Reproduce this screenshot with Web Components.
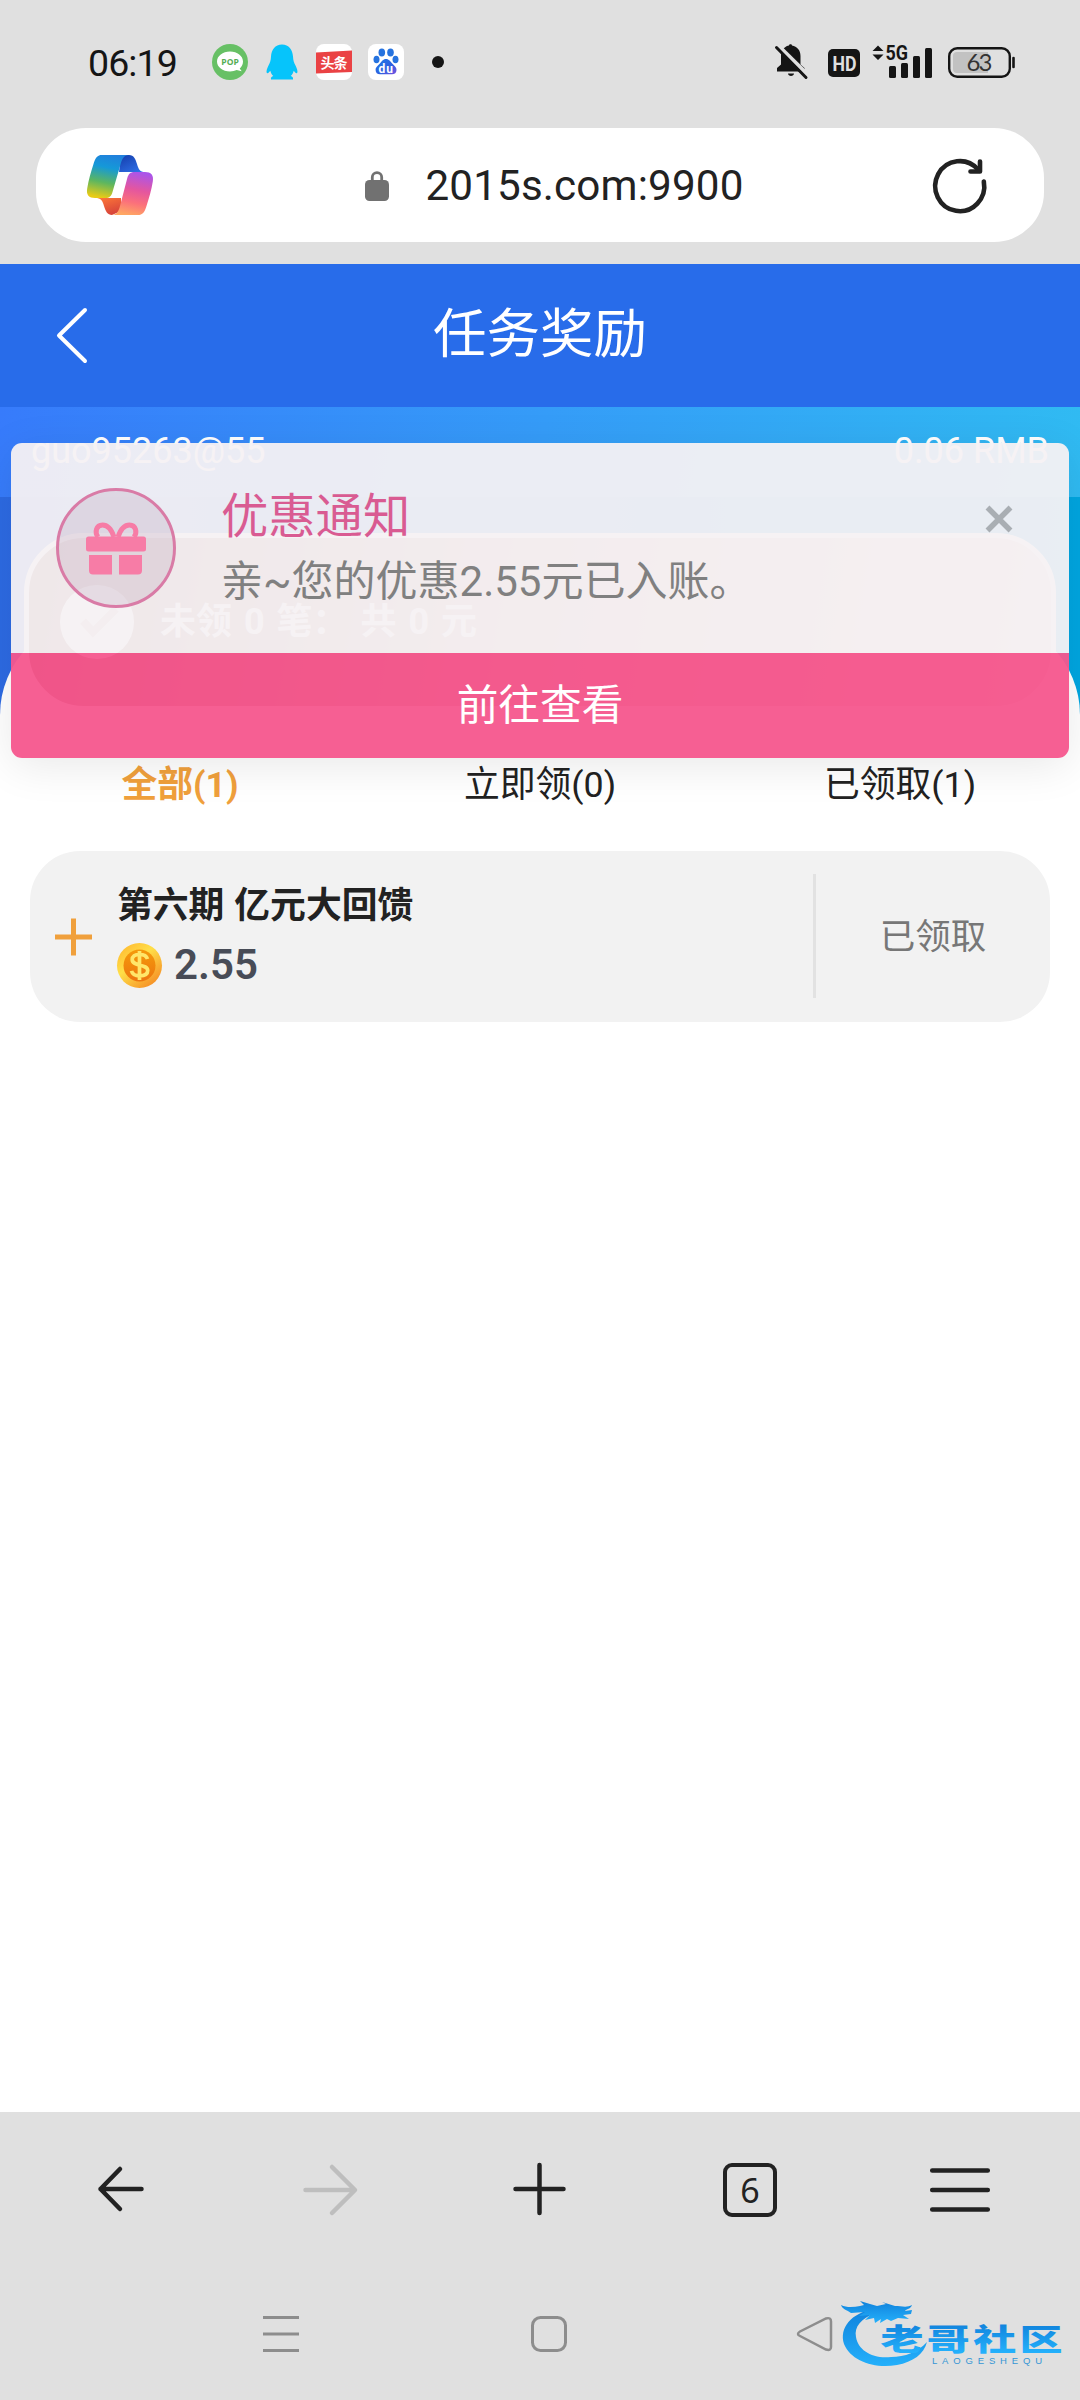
<!DOCTYPE html>
<html lang="zh-CN">
<head>
<meta charset="utf-8">
<meta name="viewport" content="width=device-width">
<title>任务奖励</title>
<style>
html,body{margin:0;padding:0}
body{width:1080px;height:2400px;overflow:hidden;background:#e0e0e0;font-family:Roboto,"Noto Sans CJK SC",sans-serif;color:#222}
</style>
</head>
<body>
<phone-screen></phone-screen>
<script>
const define=(name,css,html)=>{
  const t=document.createElement('template');
  t.innerHTML=`<style>*{box-sizing:border-box}svg{display:block;flex:none;overflow:visible}${css}</style>${html}`;
  customElements.define(name,class extends HTMLElement{
    constructor(){super();this.attachShadow({mode:'open'}).append(t.content.cloneNode(true));}
  });
};

define('status-bar',`
:host{display:flex;height:128px;padding:0 65px 4px 88px;align-items:center;justify-content:space-between;color:#151515}
.l,.r{display:flex;align-items:center;height:40px}
time{font-size:37.5px;line-height:40px;letter-spacing:-.9px;width:124px;padding-top:2px}
.l svg+svg{margin-left:16px}
`,`
<div class="l"><time>06:19</time>
<svg width="36" height="36" viewBox="0 0 36 36"><circle cx="18" cy="18" r="18" fill="#67c065"/><path d="M18 7.500c7.300 0 13 4.500 13 10 0 3-1.500 5.500-3.300 7l2 2.800-5-1.200c-2 .9-4 1.400-6.700 1.400-7.300 0-13-4.500-13-10s5.700-10 13-10z" fill="#fff"/><text x="9.300" y="20.800" font-family="Open Sans,sans-serif" font-size="8.500" font-weight="700" fill="#55ad54" textLength="17.500">POP</text></svg>
<svg width="36" height="36" viewBox="0 0 36 36"><path d="M18 .5c7 0 10.500 5 11 12 .2 4 1 6 2.500 9 1.500 3 2.500 6 1.700 7.500-.9.800-2.500-1-3.500-2.300-.5 2.300-1.500 4-3 5.300 1.800.7 2.700 1.600 2.300 3.500H7c-.4-1.900.5-2.800 2.300-3.500-1.500-1.300-2.500-3-3-5.300-1 1.300-2.600 3.100-3.500 2.300C2 27.500 3 24.500 4.500 21.500c1.500-3 2.300-5 2.500-9C7.500 5.500 11 .5 18 .5z" fill="#06c4fb"/></svg>
<svg width="36" height="36" viewBox="0 0 36 36"><rect width="36" height="36" rx="8" fill="#fff"/><path d="M0 8.500L36 6.500V28L0 29.500z" fill="#ea4244"/><text x="4.500" y="23.500" font-family="Noto Sans CJK SC,sans-serif" font-size="14" font-weight="700" fill="#fff" textLength="27">头条</text></svg>
<svg width="36" height="36" viewBox="0 0 36 36"><rect width="36" height="36" rx="8" fill="#fff"/><linearGradient id="p" x2="1" y2="1"><stop stop-color="#1f7be6"/><stop offset=".6" stop-color="#2f5fe0"/><stop offset="1" stop-color="#7b52e0"/></linearGradient><g fill="#2673df"><ellipse cx="13.800" cy="8.500" rx="3.300" ry="4"/><ellipse cx="22.500" cy="8.500" rx="3.300" ry="4"/><ellipse cx="8.500" cy="15.500" rx="3" ry="3.800"/><ellipse cx="27.500" cy="15.500" rx="3" ry="3.800"/></g><path d="M18 15c3 0 4.500 2.500 6.200 4.600 2 2.400 4.300 3.400 4.300 6.400 0 3-2 4.500-5 4.300H12.500C9.500 30.500 7.600 29 7.600 26c0-3 2.400-4 4.300-6.400C13.600 17.500 15 15 18 15z" fill="url(#p)"/><text x="10.500" y="28.500" font-family="Roboto,sans-serif" font-weight="700" font-size="12" fill="#fff" textLength="14.500">du</text></svg>
<svg width="12" height="12" style="margin-left:28px"><circle cx="6" cy="6" r="6" fill="#151515"/></svg>
</div>
<div class="r">
<svg width="34" height="36" viewBox="0 0 34 36"><path d="M2 27.500v-3.500l4-3.500v-9C6 5 11 2 14 1.500c0-1.800 3-1.800 3 0C22 2.500 25.500 6 25.500 12v8.500l4 3.500v3.500z" fill="#151515"/><path d="M13 29.500h6c0 3.300-6 3.300-6 0z" fill="#151515"/><path d="M2.500 1L33 31" stroke="#e0e0e0" stroke-width="4"/><path d="M1.500 3.500L31 33.500" stroke="#151515" stroke-width="3" stroke-linecap="round"/></svg>
<svg width="32" height="28" viewBox="0 0 32 28" style="margin:2px 12px 0 19px"><rect width="32" height="28" rx="5" fill="#151515"/><text x="4.500" y="21.500" font-family="Roboto,sans-serif" font-size="21" font-weight="700" fill="#e0e0e0" textLength="24" lengthAdjust="spacingAndGlyphs">HD</text></svg>
<svg width="60" height="34" viewBox="0 0 60 34" fill="#151515"><path d="M6 .5l5.500 5.500H.5zM.5 9.500h11L6 15z"/><text x="13.500" y="15" font-family="Roboto,sans-serif" font-size="21" font-weight="700" textLength="22.500" lengthAdjust="spacingAndGlyphs">5G</text><rect x="17" y="21" width="7" height="12" rx="1.500"/><rect x="29" y="18" width="7" height="15" rx="1.500"/><rect x="41" y="11" width="7" height="22" rx="1.500"/><rect x="53" y="3" width="7" height="30" rx="1.500"/></svg>
<svg width="67" height="31" viewBox="0 0 67 31" style="margin-left:16px"><rect x="1.200" y="1.200" width="60.600" height="28.600" rx="8" fill="none" stroke="#151515" stroke-width="2.400"/><path d="M9 5h31v21H9q-4 0-4-4V9q0-4 4-4z" fill="#c2c2c2"/><path d="M65.500 11v9" stroke="#151515" stroke-width="2.600" stroke-linecap="round"/><text x="18.500" y="24" font-family="Lato,sans-serif" font-size="24" fill="#333" textLength="26">63</text></svg>
</div>`);

define('address-bar',`
:host{display:flex;height:114px;margin:0 36px 22px;border-radius:50px;background:#fff;align-items:center;padding:0 56px 0 51px;justify-content:space-between}
.u{display:flex;align-items:center;gap:36px;font-size:42.200px;line-height:50px;padding:1px 0 0 24px;letter-spacing:.15px}
`,`
<svg width="66" height="60" viewBox="0 0 66 60"><defs>
<linearGradient id="a" x1=".6" y1="0" x2=".4" y2="1"><stop stop-color="#2080dc"/><stop offset=".3" stop-color="#1599d8"/><stop offset=".65" stop-color="#5cb660"/><stop offset="1" stop-color="#e8cb16"/></linearGradient>
<linearGradient id="b" x1="1" y1="1" x2=".2" y2="0"><stop stop-color="#3276ee"/><stop offset="1" stop-color="#1641b0"/></linearGradient>
<linearGradient id="c" x1=".6" y1="0" x2=".4" y2="1"><stop stop-color="#aa55ea"/><stop offset=".4" stop-color="#e4569f"/><stop offset=".7" stop-color="#fb707b"/><stop offset="1" stop-color="#ffa763"/></linearGradient>
<linearGradient id="d" x2=".5" y2="1"><stop stop-color="#ff7b38"/><stop offset="1" stop-color="#d8453a"/></linearGradient></defs>
<path d="M34 0h8c5 0 6.500 4 8 9 1.600 5.500 3 8 8 8H32z" fill="url(#b)"/>
<path d="M8 43h26v13l-9 4c-4.500 0-6.500-4-8-9-1.500-5.500-3-8-9-8z" fill="url(#d)"/>
<path d="M15 0h27c-5 0-7 4-8.500 9.500L25.500 37c-1.200 4-3 6-7 6H8c-6 0-9-3-7.800-9.500C1.500 25 4 17 6.500 9 8.500 2.500 10.500 0 15 0z" fill="url(#a)"/>
<path d="M51 60H25c4.500 0 6.500-3.500 8-9l7.300-28c1.200-4 3-6 7-6H58c6 0 9 3 7.800 9.500C64.500 35 62 43 59.500 51c-2 6.500-4 9-8.500 9z" fill="url(#c)"/></svg>
<div class="u"><svg width="24" height="30" viewBox="0 0 24 30"><rect y="9" width="24" height="21" rx="4.500" fill="#717171"/><path d="M7.300 11V6.300a4.700 4.700 0 0 1 9.400 0V11" fill="none" stroke="#717171" stroke-width="2.800"/></svg><span>2015s.com:9900</span></div>
<svg width="56" height="56" viewBox="0 0 56 56" fill="none" stroke="#222" stroke-width="4.600" stroke-linecap="round" stroke-linejoin="round"><path d="M51.800 24.500A24.500 25 0 1 1 46 12.500"/><path d="M48 4.500V14.500H38.500"/></svg>`);

define('page-header',`
:host{display:flex;height:143px;background:#286cea;align-items:center;padding:0 55px;color:#fff}
h1{flex:1;margin:0 31px 0 0;text-align:center;font-weight:400;font-size:53.500px;line-height:70px;padding-bottom:1px}
`,`<svg width="31" height="54" viewBox="0 0 31 54" fill="none" stroke="#fff" stroke-width="4" stroke-linecap="round" stroke-linejoin="round"><path d="M30 1L4 26.500 30 52"/></svg><h1><slot></slot></h1>`);

define('balance-strip',`
:host{display:flex;height:90px;background:linear-gradient(100deg,#377bfb,#359cf8 50%,#30bbf2);justify-content:space-between;padding:23px 31px 0 31px;color:#fff;font-size:36px;line-height:42px}
`,`<slot name="user"></slot><slot name="amount"></slot>`);

define('pending-summary',`
:host{display:flex;position:relative;z-index:1;margin:0 24px;height:178px;border:5px solid #fff;border-radius:60px;background:linear-gradient(100deg,#7a3c30,#c69a90 50%,#edd0d0);align-items:center;padding:0 31px 0;gap:26px;color:#fff;font-size:36px;font-weight:700}
span{white-space:pre;line-height:44px;word-spacing:3px}
`,`<svg width="74" height="74" viewBox="0 0 74 74"><circle cx="37" cy="37" r="37" fill="#fff"/><path d="M23 36l10 11 23-23" fill="none" stroke="#d4b5af" stroke-width="8"/></svg><span><slot></slot></span>`);

define('reward-tabs',`
:host{display:flex;height:66px;font-size:35.800px;line-height:68px;text-align:center}
::slotted(*){flex:1}
::slotted([active]){color:#f0a03c;font-weight:700}
`,`<slot></slot>`);

define('reward-card',`
:host{display:flex;height:171px;margin:34px 30px 0;border-radius:50px;background:#f2f2f2;align-items:center;padding-left:24px}
.m{flex:1;padding:3px 0 0 24px}
h2{margin:0;font-size:35.800px;line-height:50px;font-weight:700;word-spacing:1px}
.v{display:flex;align-items:center;gap:12px;font-size:42px;line-height:64px;font-weight:600;color:#484c57;padding-top:2px;margin-bottom:-2px}
.s{width:237px;height:124px;border-left:3px solid #e2e2e2;display:flex;align-items:center;justify-content:center;color:#777;font-size:35.500px;padding-bottom:5px;margin-top:-2px}
`,`<svg width="39" height="38"><path d="M1 19h37M19.500 0.500v37" stroke="#f0a03c" stroke-width="5"/></svg>
<div class="m"><h2><slot name="title"></slot></h2><div class="v"><svg width="45" height="45" viewBox="0 0 45 45"><defs><linearGradient id="o" x2=".8" y2="1"><stop stop-color="#ffb22c"/><stop offset=".45" stop-color="#ffdf48"/><stop offset="1" stop-color="#f58b24"/></linearGradient><linearGradient id="i" x2="0" y2="1"><stop stop-color="#f49b0b"/><stop offset="1" stop-color="#ed750f"/></linearGradient></defs><circle cx="22.500" cy="22.500" r="22.500" fill="url(#o)"/><circle cx="22.500" cy="22.500" r="16" fill="url(#i)"/><path d="M30.500 16c-1-3.500-4-4.700-8-4.700-4.500 0-7.300 2-7.300 5.300 0 7.500 15.500 3.700 15.500 11 0 3.500-3.300 5.300-8 5.300-4.400 0-7.400-1.700-8.200-5M22.500 8v29" fill="none" stroke="#ffe66a" stroke-width="3.700"/></svg><slot name="value"></slot></div></div>
<div class="s"><slot name="state"></slot></div>`);

define('promo-notice',`
:host{display:flex;flex-direction:column;position:absolute;z-index:5;left:11px;right:11px;top:36px;height:315px;border-radius:11px;box-shadow:0 8px 44px rgba(0,0,0,.09)}
.b{display:flex;height:210px;padding:45px 56px 0 45px;background:rgba(246,241,243,.95);border-radius:11px 11px 0 0}
.t{flex:1;padding:0 0 0 45px;color:#808080;font-size:42px;line-height:56px}
h3{margin:-5px 0 0;font-size:47.300px;line-height:68px;font-weight:400;color:#d95b92}
.t div{margin-top:3px}
.f{height:105px;background:rgba(245,86,141,.95);border-radius:0 0 11px 11px;color:#fff;text-align:center;font-size:41.700px;line-height:106px}
`,`<div class="b"><svg width="120" height="120" viewBox="0 0 120 120"><circle cx="60" cy="60" r="58.500" fill="#baa2b8" fill-opacity=".28" stroke="#d97ba6" stroke-width="3"/><g fill="#f77ca6"><rect x="30" y="48.500" width="60" height="15" rx="2.500"/><path d="M33 67h23v19.500H37q-4 0-4-4zM63 67h23v15.500q0 4-4 4H63z"/></g><path d="M58 49c-2-6-6-12-11.500-12-6.500 0-8 7.500-4.500 12M62 49c2-6 6-12 11.500-12 6.500 0 8 7.500 4.500 12" fill="none" stroke="#f77ca6" stroke-width="5"/></svg>
<div class="t"><h3><slot name="title"></slot></h3><div><slot></slot></div></div>
<svg width="28" height="28" viewBox="0 0 28 28" style="margin-top:17px"><path d="M2.500 2.500l23 23m0-23l-23 23" stroke="#a9aeb3" stroke-width="5.500"/></svg></div>
<div class="f"><slot name="action"></slot></div>`);

define('browser-toolbar',`
:host{display:flex;height:154px;align-items:center;padding:0 15px}
.c{width:210px;display:flex;justify-content:center}
.k{width:54px;height:54px;border:4.500px solid #222;border-radius:9px;display:flex;align-items:center;justify-content:center;font:34px/40px "Noto Sans",sans-serif;color:#222;margin-top:2px;padding-bottom:1px}
`,`
<div class="c"><svg width="60" height="50" viewBox="0 0 60 50" fill="none" stroke="#222" stroke-width="4.500" stroke-linecap="round" stroke-linejoin="round"><path d="M51.500 25H10.500M30 5L10.500 25 30 45"/></svg></div>
<div class="c"><svg width="60" height="50" viewBox="0 0 60 50" fill="none" stroke="#bebebe" stroke-width="4.500" stroke-linecap="round" stroke-linejoin="round"><path d="M5.500 26h49M32 3l23 23-23 23"/></svg></div>
<div class="c"><svg width="52" height="52" fill="none" stroke="#222" stroke-width="4.500" stroke-linecap="round"><path d="M1.500 26h48M25.500 2v48"/></svg></div>
<div class="c"><div class="k">6</div></div>
<div class="c"><svg width="60" height="48" fill="none" stroke="#222" stroke-width="4.500" stroke-linecap="round"><path d="M2.200 5.500h55.600M2.200 25h55.600M2.200 44.500h55.600"/></svg></div>`);

define('system-nav',`
:host{display:flex;height:134px;align-items:center;padding:2px 17px 0 263px}
svg{fill:none;stroke:#8d8d8d;stroke-width:3}
`,`
<svg width="36" height="36"><path d="M0 1.500h36M0 18h36M0 34.500h36"/></svg>
<svg width="36" height="36" style="margin-left:232px"><rect x="1.500" y="1.500" width="33" height="33" rx="8"/></svg>
<svg width="36" height="36" style="margin-left:230px"><path d="M3 15.500L29 2.500q5-1.500 5 3V31q0 4-5 2.500L3 20q-4-2 0-4.500z" stroke-width="2.500"/></svg>
<community-mark style="margin-left:8px"></community-mark>`);

define('community-mark',`:host{display:block;padding-top:6px}`,`
<svg width="224" height="72" viewBox="0 0 224 72"><defs><linearGradient id="g" x2="0" y2="1"><stop stop-color="#1082dc"/><stop offset="1" stop-color="#24b0fb"/></linearGradient>
<linearGradient id="t" gradientUnits="userSpaceOnUse" x1="0" y1="32" x2="0" y2="74"><stop stop-color="#1082dc"/><stop offset="1" stop-color="#24b0fb"/></linearGradient></defs>
<path d="M33 8C10 12-2 27 3 43c7 17 30 25 53 21 16-3 27-11 30-23-9 10-22 15-36 15C31 58 17 49 15 36 13 26 20 17 35 12z" fill="url(#g)"/>
<path d="M0 4c6 3 13 2 19 1l4-1-4-4 10 3 7 2 9-2-4-2 13 4c6 0 12 2 17-1-1 4-6 4-7 6l7-1-1 4-8 1 6 4-11-1-7 3-4-2-7 4 1-4-6 4-1-5-9 2 5-5-11 1 6-4-14 1C6 9 1 8 0 4z" fill="url(#g)"/>
<text transform="scale(1 .69)" x="39.500" y="71" font-family="Noto Sans CJK SC,sans-serif" font-weight="900" font-size="43" textLength="182" fill="url(#t)" stroke="none">老哥社区</text>
<text x="91" y="62.500" font-family="Liberation Sans,sans-serif" font-size="9.500" fill="#3596d5" textLength="110" stroke="none">LAOGESHEQU</text></svg>`);

define('phone-screen',`
:host{display:flex;flex-direction:column;height:2400px}
.p{position:relative;flex:1;display:flex;flex-direction:column}
.h{flex:1;display:flex;flex-direction:column;padding-top:36px;background:linear-gradient(90deg,#2d6ae3,#1689e2 50%,#00a6e0)}
.w{flex:1;margin-top:-93px;background:#fff;border-radius:97px 97px 0 0;padding-top:133px}
`,`
<status-bar></status-bar>
<address-bar></address-bar>
<page-header>任务奖励</page-header>
<main class="p">
<balance-strip><span slot="user">guo95263@55</span><span slot="amount">0.06 RMB</span></balance-strip>
<div class="h"><pending-summary>未领 0 笔： 共 0 元</pending-summary>
<div class="w"><reward-tabs><span active>全部(1)</span><span>立即领(0)</span><span>已领取(1)</span></reward-tabs>
<reward-card><span slot="title">第六期 亿元大回馈</span><span slot="value">2.55</span><span slot="state">已领取</span></reward-card></div></div>
<promo-notice><span slot="title">优惠通知</span>亲~您的优惠2.55元已入账。<span slot="action">前往查看</span></promo-notice>
</main>
<browser-toolbar></browser-toolbar>
<system-nav></system-nav>`);
</script>
</body>
</html>
